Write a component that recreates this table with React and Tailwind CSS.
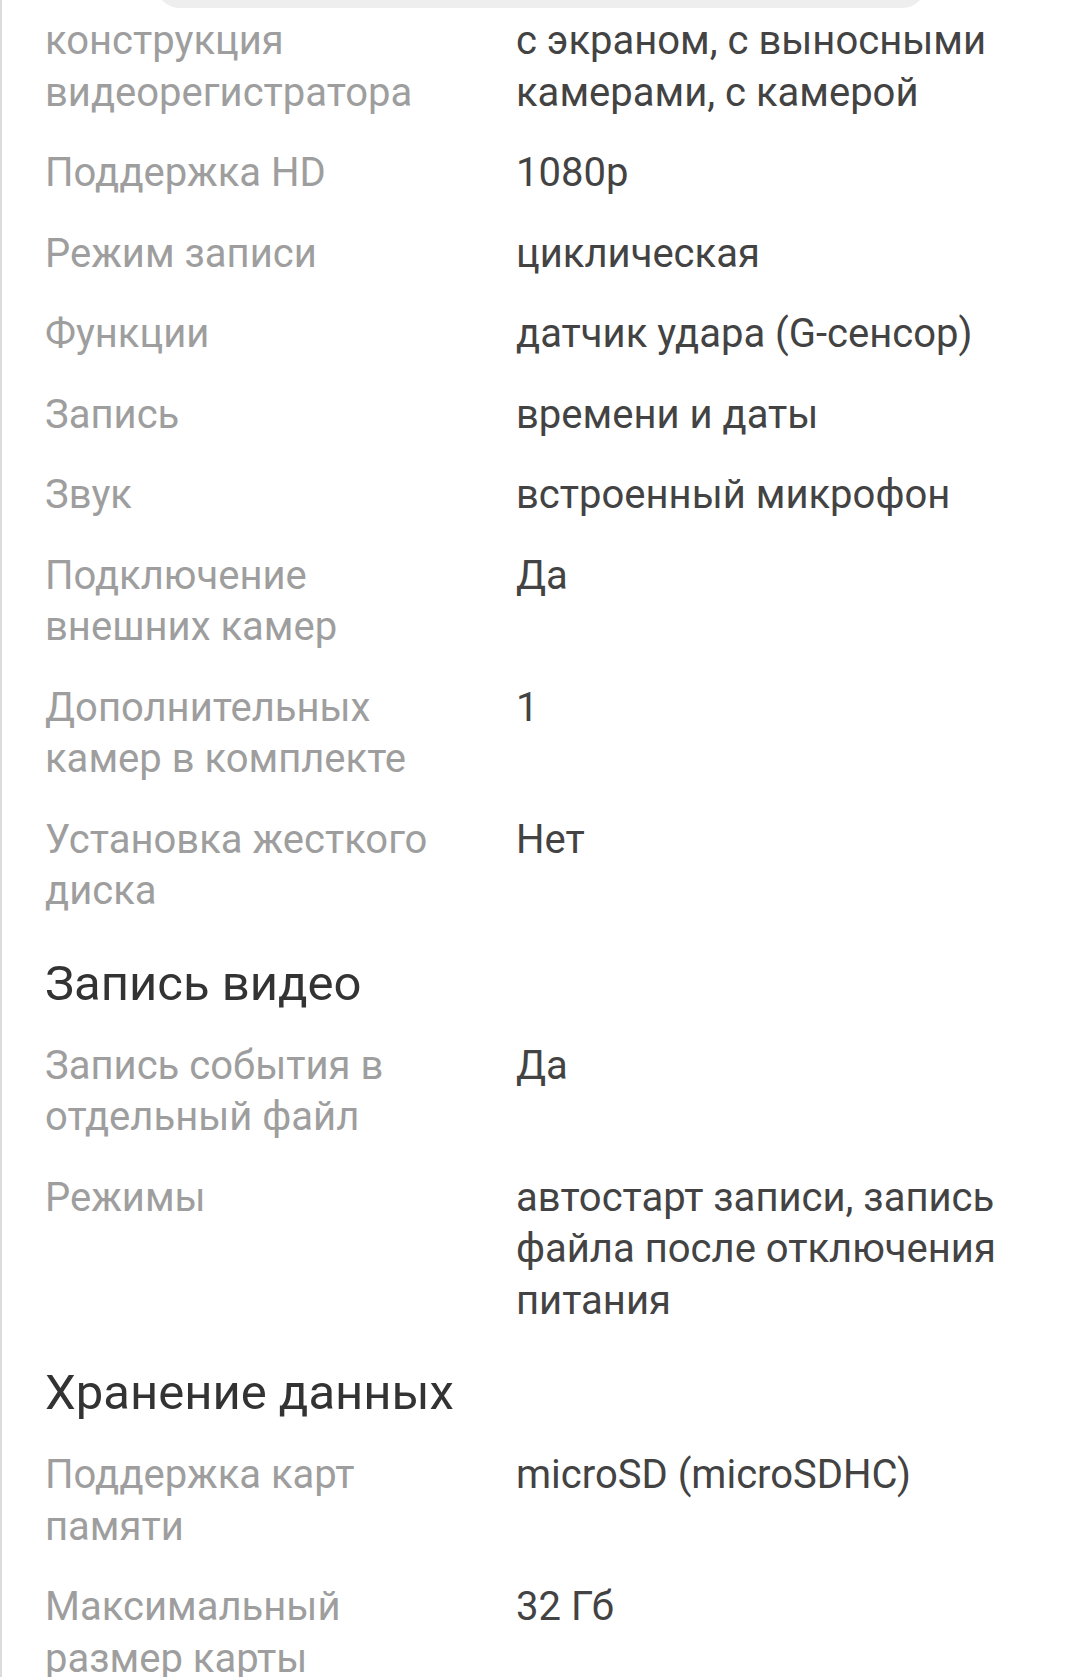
const specs = [
  { type: 'row', label: 'конструкция видеорегистратора', value: 'с экраном, с выносными камерами, с камерой' },
  { type: 'row', label: 'Поддержка HD', value: '1080p' },
  { type: 'row', label: 'Режим записи', value: 'циклическая' },
  { type: 'row', label: 'Функции', value: 'датчик удара (G-сенсор)' },
  { type: 'row', label: 'Запись', value: 'времени и даты' },
  { type: 'row', label: 'Звук', value: 'встроенный микрофон' },
  { type: 'row', label: 'Подключение внешних камер', value: 'Да' },
  { type: 'row', label: 'Дополнительных камер в комплекте', value: '1' },
  { type: 'row', label: 'Установка жесткого диска', value: 'Нет' },
  { type: 'title', label: 'Запись видео' },
  { type: 'row', label: 'Запись события в отдельный файл', value: 'Да' },
  { type: 'row', label: 'Режимы', value: 'автостарт записи, запись файла после отключения питания' },
  { type: 'title', label: 'Хранение данных' },
  { type: 'row', label: 'Поддержка карт памяти', value: 'microSD (microSDHC)' },
  { type: 'row', label: 'Максимальный размер карты', value: '32 Гб' },
];

const SpecRow = ({ label, value }) => (
  <div className="grid grid-cols-[471px_1fr]">
    <div className="pr-[60px] text-[#9e9e9e]">{label}</div>
    <div className="text-[#434343]">{value}</div>
  </div>
);

const SectionTitle = ({ children }) => (
  <h2 className="mt-[10px] text-[49px] leading-[55px] text-[#333333]">{children}</h2>
);

export default function App() {
  return (
    <div className="relative h-[1677px] w-[1080px] overflow-hidden border-l-2 border-[#dcdcdc] bg-white font-['Roboto',sans-serif]">
      {/* floating bar at top, mostly scrolled away */}
      <div className="absolute left-[155px] top-[-40px] h-[48px] w-[768px] rounded-b-[22px] bg-[#eeeeee]" />
      <div className="flex flex-col gap-[29px] pl-[43px] pr-[45px] pt-[15px] text-[40px] leading-[51.5px]">
        {specs.map((s, i) =>
          s.type === 'title' ? (
            <SectionTitle key={i}>{s.label}</SectionTitle>
          ) : (
            <SpecRow key={i} label={s.label} value={s.value} />
          )
        )}
      </div>
    </div>
  );
}
